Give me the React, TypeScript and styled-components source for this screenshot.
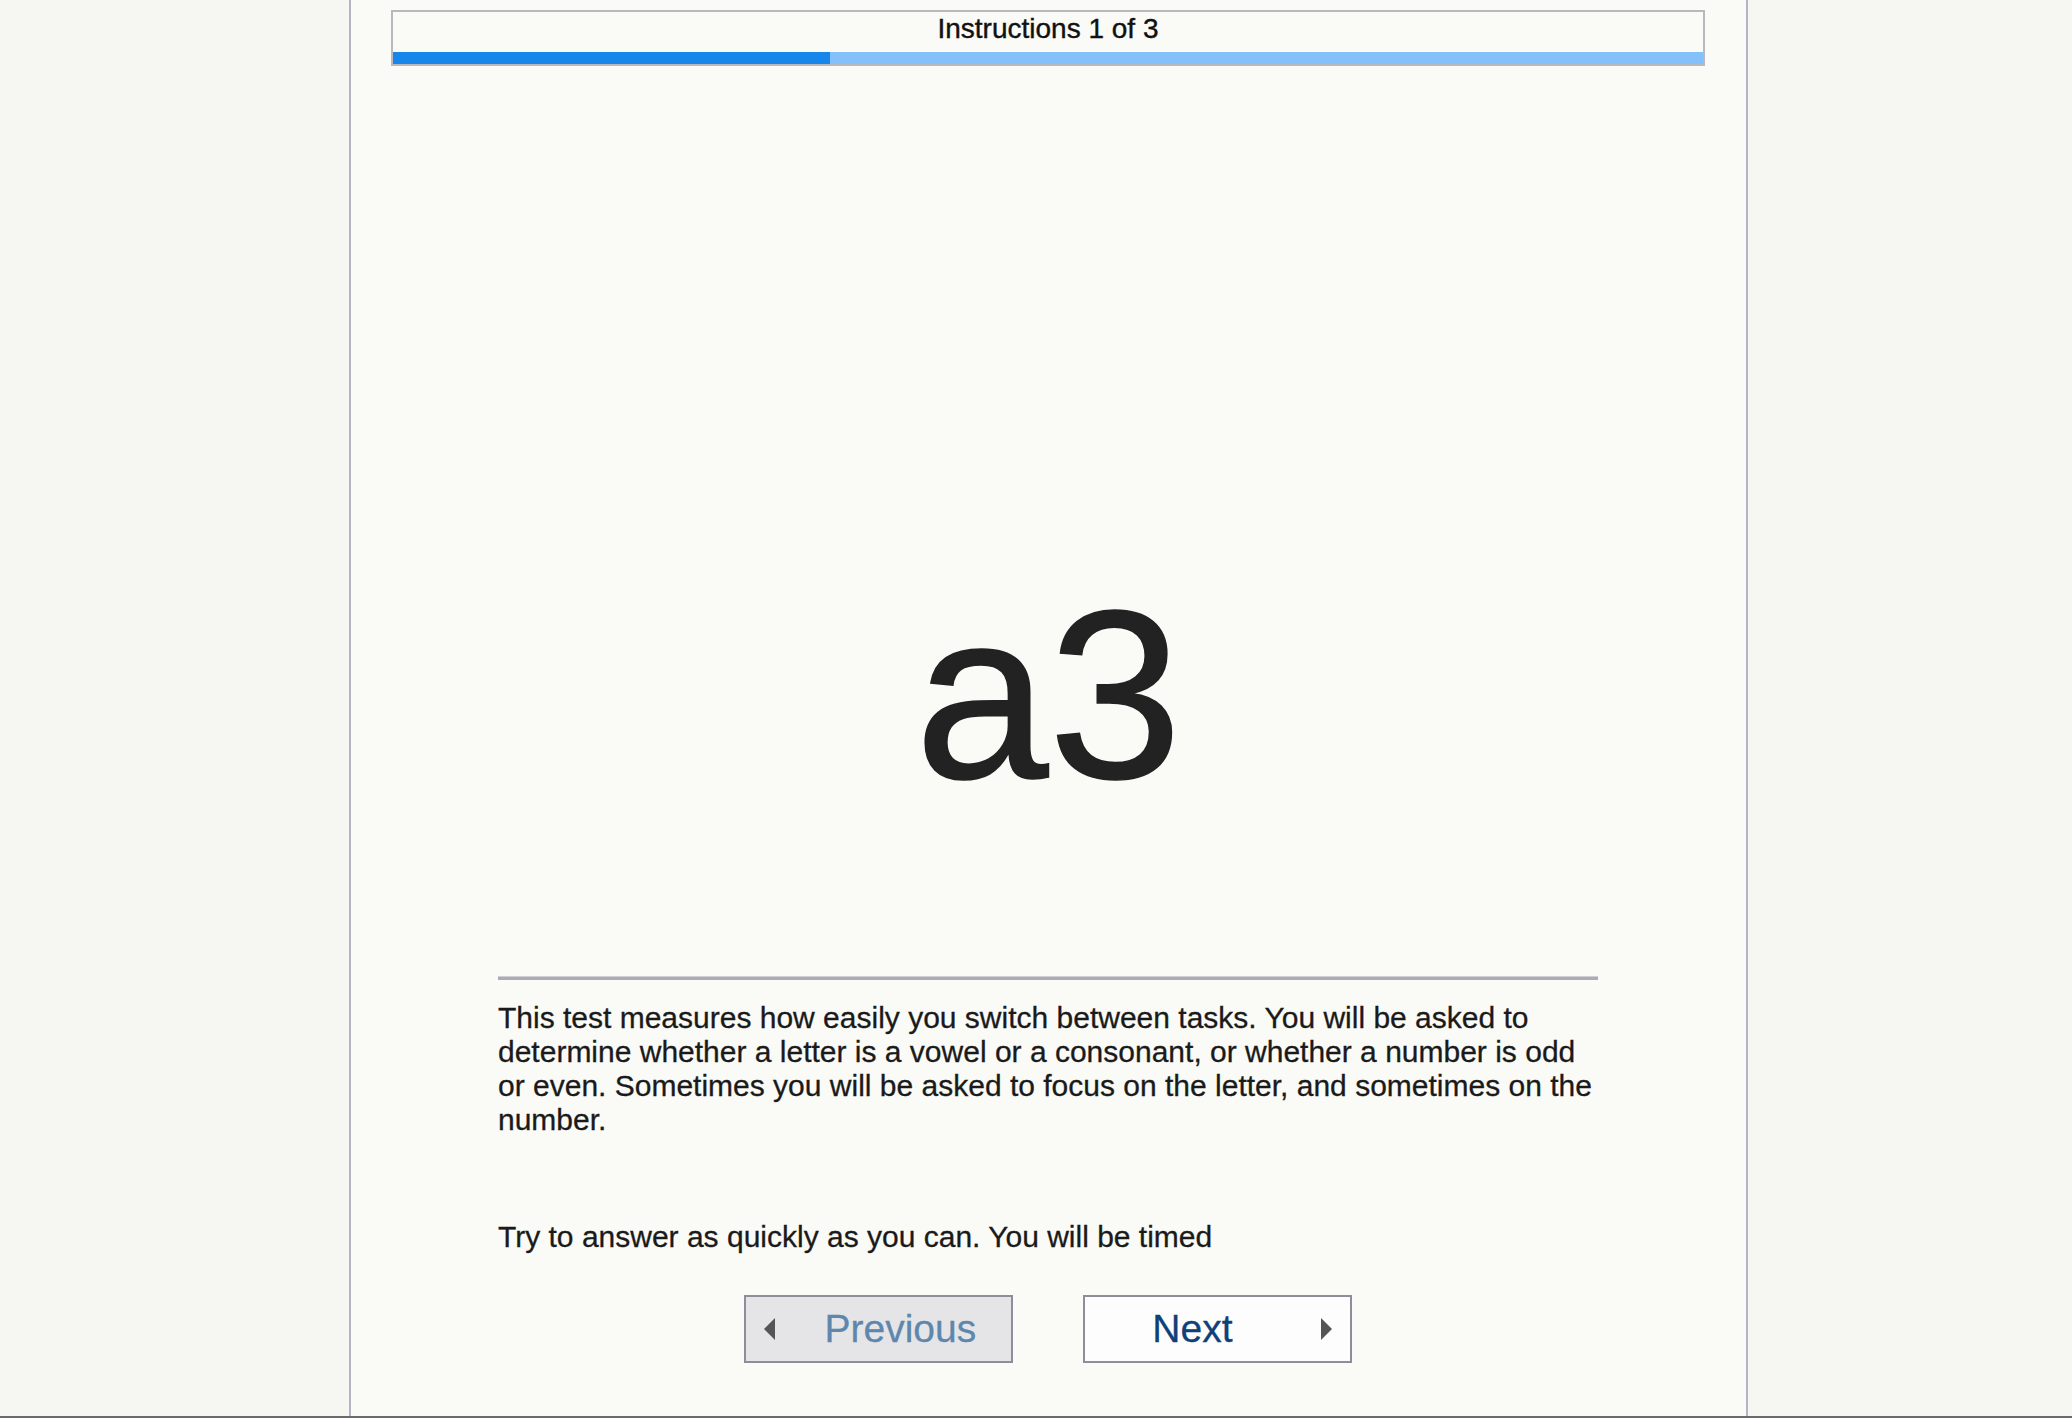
import React from "react";
import styled, { createGlobalStyle } from "styled-components";

const GlobalStyle = createGlobalStyle`
  html, body {
    margin: 0;
    padding: 0;
    background: #f7f7f4;
    font-family: "Liberation Sans", Arial, Helvetica, sans-serif;
  }
  #root { height: 1418px; }
`;

const Page = styled.div`
  box-sizing: border-box;
  height: 1418px;
  display: flex;
  background: #f6f6f3;
  border-bottom: 2px solid #6a6a6e;
  overflow: hidden;
`;

const Column = styled.main`
  box-sizing: border-box;
  margin-left: 349px;
  width: 1399px;
  height: 100%;
  border-left: 2px solid #b4b4c2;
  border-right: 2px solid #b4b4c2;
  background: #fafaf7;
  padding-top: 10px;
  display: flex;
  flex-direction: column;
`;

const Header = styled.header`
  box-sizing: border-box;
  width: 1314px;
  margin-left: 40px;
  border: 2px solid #b9b9bd;
  display: flex;
  flex-direction: column;
`;

const HeaderTitle = styled.div`
  height: 40px;
  box-sizing: border-box;
  padding-top: 1px;
  padding-bottom: 7px;
  font-size: 28px;
  line-height: 32px;
  text-align: center;
  color: #111;
  -webkit-text-stroke: 0.4px #111;
`;

const ProgressTrack = styled.div`
  height: 12px;
  background: #84c1fb;
  display: flex;
`;

const ProgressFill = styled.div`
  height: 100%;
  background: #1786ea;
`;

const Stimulus = styled.div`
  padding-top: 509px;
  padding-bottom: 161px;
  font-size: 240px;
  line-height: 240px;
  text-align: center;
  color: #222;
  -webkit-text-stroke: 1.5px #222;
`;

const Content = styled.section`
  margin-left: 147px;
  width: 1100px;
  color: #1a1a1a;
`;

const Separator = styled.hr`
  margin: 0;
  height: 3px;
  border: 0;
  border-top: 1px solid #cfcfd4;
  background: #acacb4;
`;

const Paragraph = styled.p<{ $gap: number }>`
  margin: ${(p) => p.$gap}px 0 0 0;
  font-size: 30px;
  line-height: 34px;
  -webkit-text-stroke: 0.3px #1a1a1a;
`;

const ButtonRow = styled.div`
  margin-top: 41px;
  display: flex;
  justify-content: center;
  gap: 70px;
  padding-right: 2px;
`;

const NavButton = styled.button<{ $disabled?: boolean; $side: "left" | "right" }>`
  box-sizing: border-box;
  width: 269px;
  height: 68px;
  border: 2px solid #8d8d9b;
  background: ${(p) => (p.$disabled ? "#e5e5e7" : "#fdfdfd")};
  padding: 0 18px;
  display: flex;
  align-items: center;
  justify-content: ${(p) => (p.$side === "left" ? "flex-start" : "flex-end")};
  font-family: "Liberation Sans", Arial, Helvetica, sans-serif;
  cursor: pointer;
`;

const Label = styled.span<{ $disabled?: boolean; $side: "left" | "right" }>`
  font-size: 39px;
  line-height: 44px;
  color: ${(p) => (p.$disabled ? "#5f87ae" : "#0f4178")};
  margin-left: ${(p) => (p.$side === "left" ? "50px" : "0")};
  margin-right: ${(p) => (p.$side === "right" ? "88px" : "0")};
  -webkit-text-stroke: 0.3px currentColor;
`;

const Arrow = ({ dir }: { dir: "left" | "right" }) => (
  <svg width="11" height="22" viewBox="0 0 11 22" aria-hidden>
    {dir === "left" ? (
      <polygon points="11,0 11,22 0,11" fill="#555558" />
    ) : (
      <polygon points="0,0 0,22 11,11" fill="#555558" />
    )}
  </svg>
);

export default function App() {
  const step = 1;
  const total = 3;
  return (
    <>
      <GlobalStyle />
      <Page>
        <Column>
          <Header>
            <HeaderTitle>
              Instructions {step} of {total}
            </HeaderTitle>
            <ProgressTrack>
              <ProgressFill style={{ width: `${(step / total) * 100}%` }} />
            </ProgressTrack>
          </Header>
          <Stimulus>a3</Stimulus>
          <Content>
            <Separator />
            <Paragraph $gap={21}>
              This test measures how easily you switch between tasks. You will be asked to
              determine whether a letter is a vowel or a consonant, or whether a number is odd
              or even. Sometimes you will be asked to focus on the letter, and sometimes on the
              number.
            </Paragraph>
            <Paragraph $gap={83}>Try to answer as quickly as you can. You will be timed</Paragraph>
          </Content>
          <ButtonRow>
            <NavButton $disabled $side="left">
              <Arrow dir="left" />
              <Label $disabled $side="left">Previous</Label>
            </NavButton>
            <NavButton $side="right">
              <Label $side="right">Next</Label>
              <Arrow dir="right" />
            </NavButton>
          </ButtonRow>
        </Column>
      </Page>
    </>
  );
}
